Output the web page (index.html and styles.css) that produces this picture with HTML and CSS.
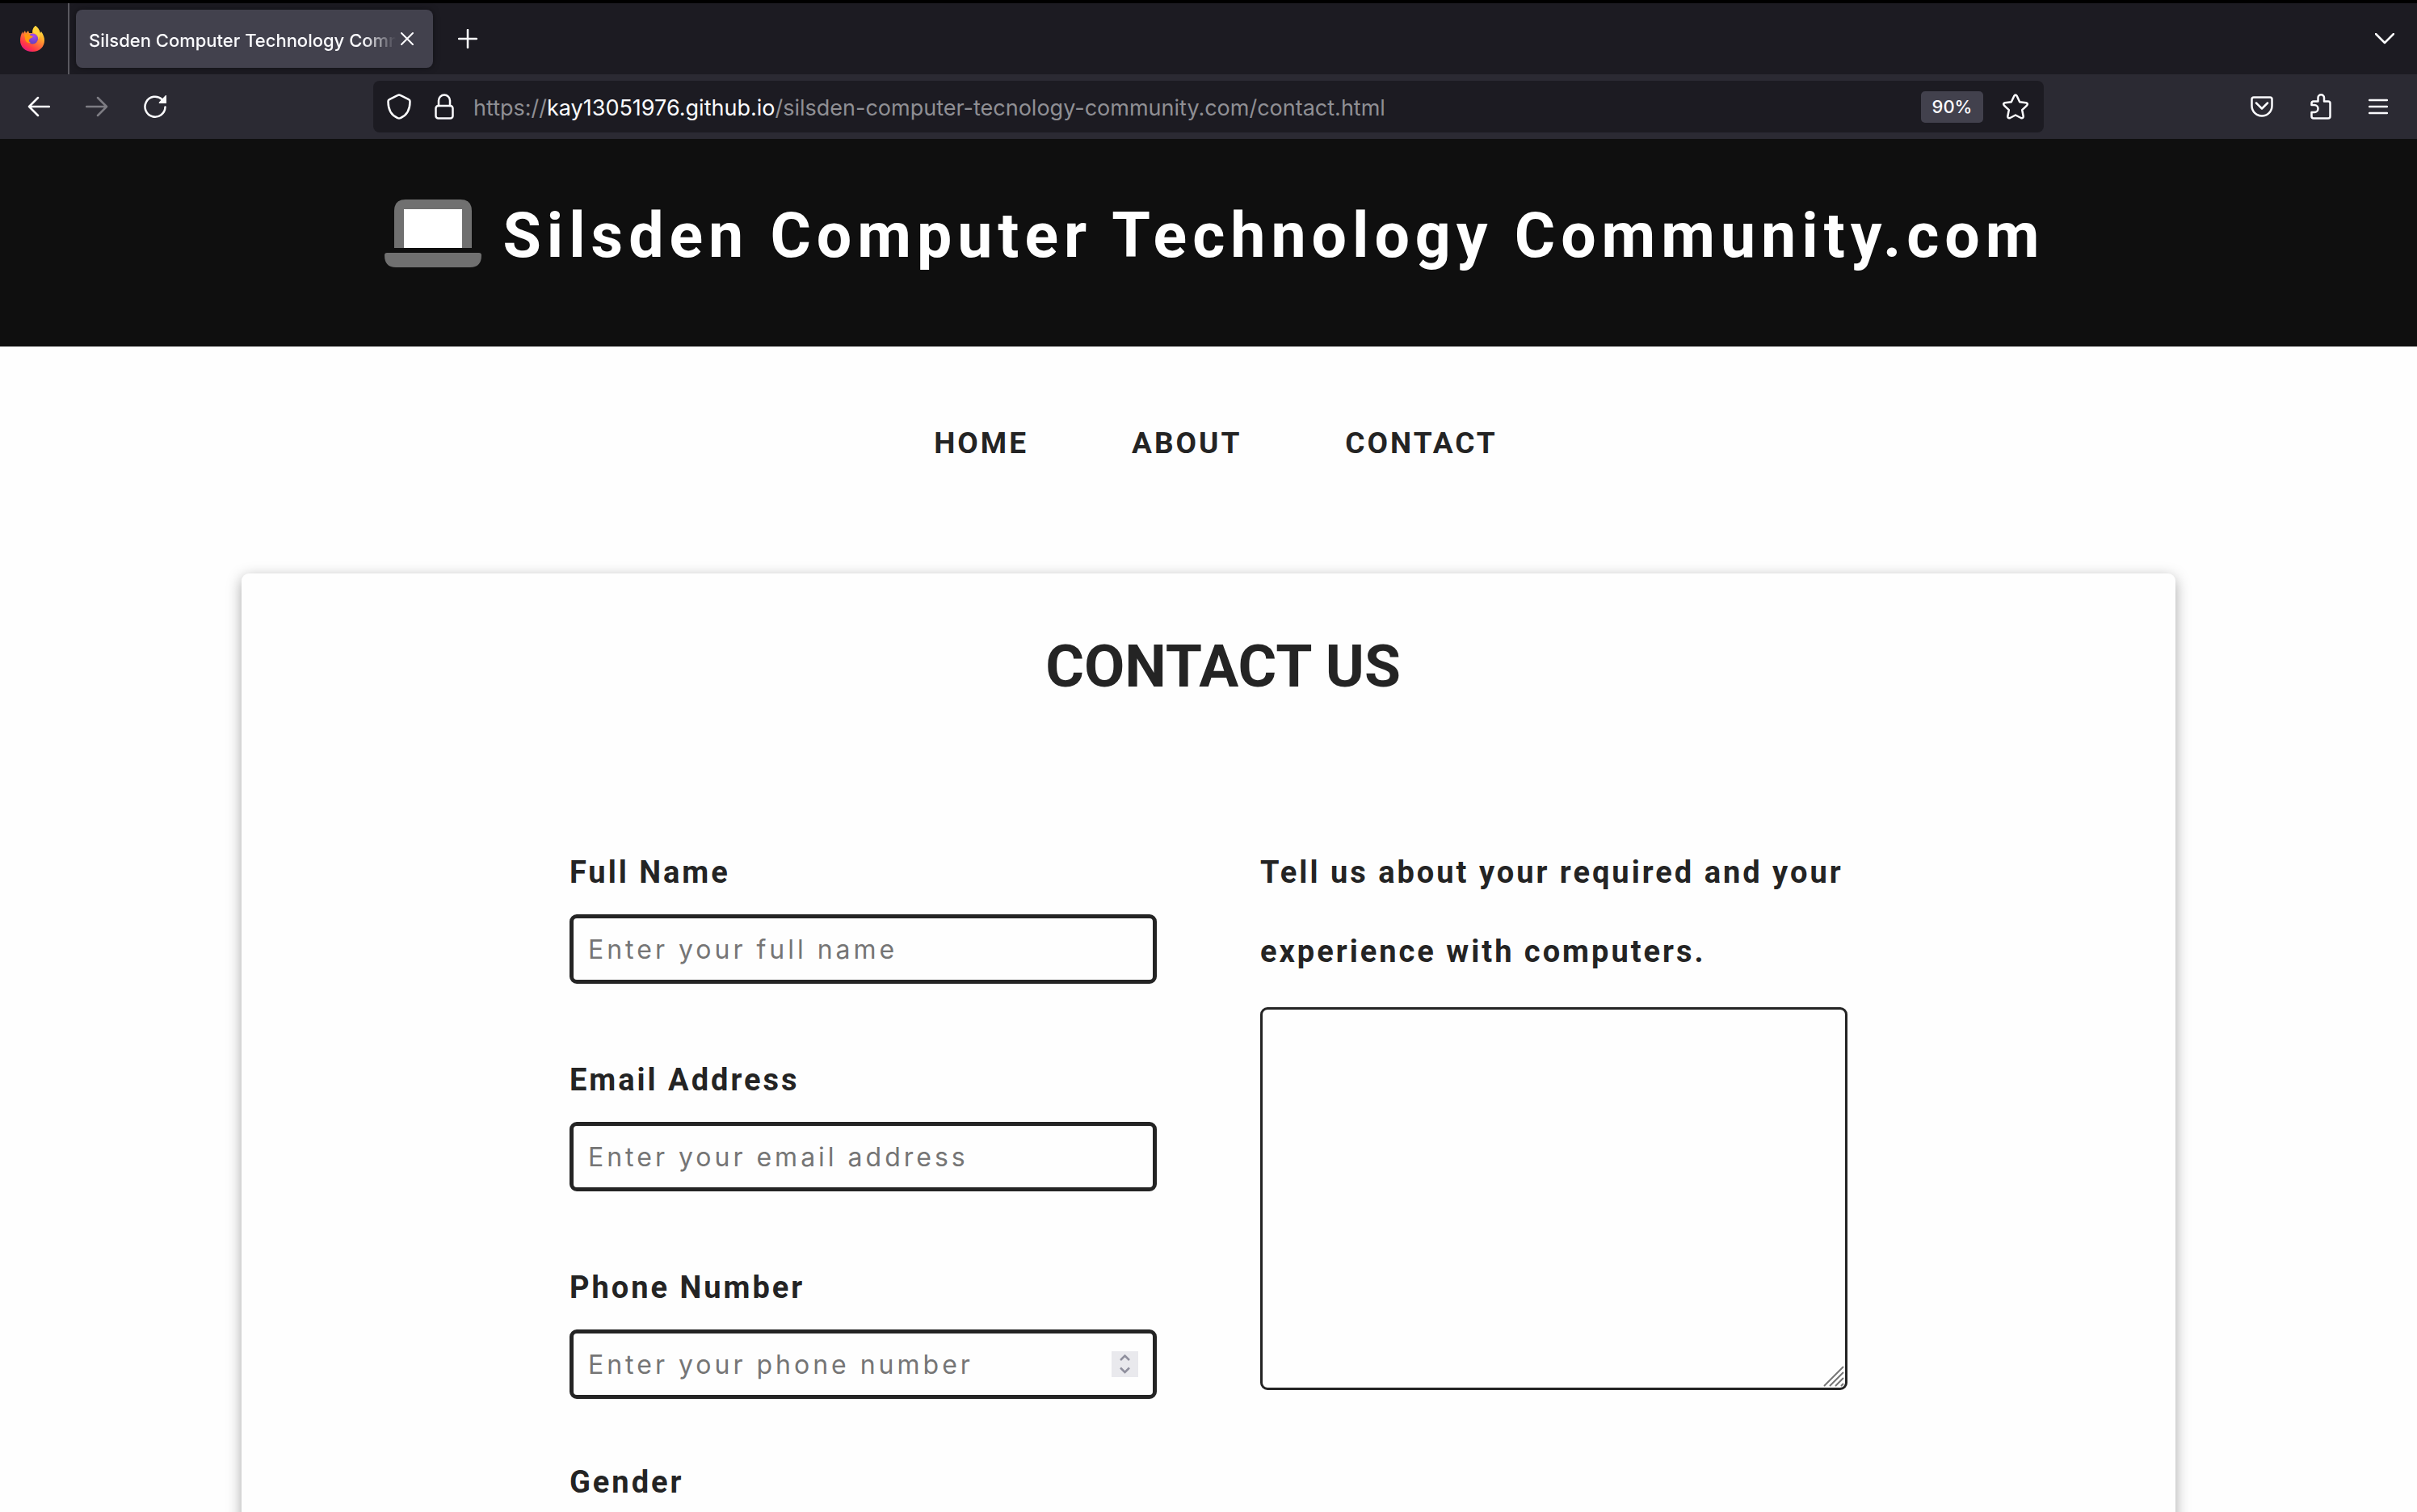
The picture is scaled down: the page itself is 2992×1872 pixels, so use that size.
FILE: index.html
```html
<!DOCTYPE html>
<html lang="en">
<head>
<meta charset="utf-8">
<meta name="viewport" content="width=device-width, initial-scale=1">
<title>Silsden Computer Technology Community</title>
<link rel="stylesheet" href="styles.css">
</head>
<body>
<div class="browser">
  <div class="tabs">
    <div class="tabs-pinned">
      <svg class="firefox" viewBox="0 0 30 32" aria-hidden="true">
        <defs>
          <linearGradient id="flame" x1="0.85" y1="0.05" x2="0.25" y2="1">
            <stop offset="0" stop-color="#fff44f"/>
            <stop offset="0.3" stop-color="#ffb12c"/>
            <stop offset="0.55" stop-color="#ff7139"/>
            <stop offset="0.8" stop-color="#ff3647"/>
            <stop offset="1" stop-color="#e31587"/>
          </linearGradient>
          <radialGradient id="globe" cx="0.6" cy="0.2" r="0.9">
            <stop offset="0" stop-color="#a84bf0"/>
            <stop offset="1" stop-color="#5b3fb8"/>
          </radialGradient>
        </defs>
        <path fill="url(#flame)" d="M19 0c3 2 5 5 6 9l1-2c3 4 4 8 4 11 0 8-6 14-15 14S0 26 0 18c0-4 1-8 3-11v3l3-4 1 3 3-3 1 3h4c0-4 1-7 4-9z"/>
        <circle cx="15.500" cy="16" r="6.500" fill="url(#globe)"/>
        <path fill="#ff980e" d="M5 11c3-2 6-1 8 1l3 1c-1 2-3 2-4 3-2 2-1 4 1 5-4 1-7-2-7-6z"/>
        <path fill="#ffd23c" d="M19 0c-4 3-4 7-2 9 4 1 6 4 5 8 3-3 3-7 2-9-1-4-3-6-5-8z"/>
      </svg>
    </div>
    <button class="tab" type="button"><span class="tab-title">Silsden Computer Technology Community</span></button>
    <button class="icon-button tab-close" type="button" aria-label="Close tab">
      <svg width="16" height="16" viewBox="0 0 16 16"><path d="M1 1l14 14M15 1L1 15"/></svg>
    </button>
    <button class="icon-button" type="button" aria-label="New tab">
      <svg width="24" height="24" viewBox="0 0 24 24"><path d="M12 1v22M1 12h22"/></svg>
    </button>
    <button class="icon-button tabs-list" type="button" aria-label="List all tabs">
      <svg width="24" height="14" viewBox="0 0 24 14"><path d="M1 1l11 11L23 1"/></svg>
    </button>
  </div>

  <div class="toolbar">
    <div class="history">
      <button class="icon-button" type="button" aria-label="Back">
        <svg width="28" height="26" viewBox="0 0 28 26"><path d="M27 13H2M13 2L2 13l11 11"/></svg>
      </button>
      <button class="icon-button is-off" type="button" aria-label="Forward" disabled>
        <svg width="28" height="26" viewBox="0 0 28 26"><path d="M1 13h25M15 2l11 11-11 11"/></svg>
      </button>
      <button class="icon-button" type="button" aria-label="Reload">
        <svg width="28" height="28" viewBox="0 0 28 28"><path d="M26.500 14.500a12.500 12.500 0 1 1-4-9.500"/><path class="solid" d="M28 0v10h-8.500q-1.500-.5-.5-1.500l7.500-8Q27.500-.5 28 0z"/></svg>
      </button>
    </div>
    <div class="address">
      <svg width="30" height="32" viewBox="0 0 30 32" aria-hidden="true"><path d="M15 1.500q1 0 2 .7l9.500 4.600q2 .8 2 3C28.500 20 24 27 17 30q-2 1-4 0C6 27 1.500 20 1.500 9.800q0-2.200 2-3L13 2.200q1-.7 2-.7z"/></svg>
      <svg width="24" height="32" viewBox="0 0 24 32" aria-hidden="true"><rect x="1.500" y="15" width="21" height="15.500" rx="3"/><path d="M5 15V8.500a7 7 0 0 1 14 0V15"/></svg>
      <div class="url" role="textbox" aria-label="Address">https://<span class="url-host">kay13051976.github.io</span>/silsden-computer-tecnology-community.com/contact.html</div>
      <button class="zoom-level" type="button">90%</button>
      <button class="icon-button" type="button" aria-label="Bookmark this page">
        <svg width="32" height="32" viewBox="0 0 32 32"><path d="M14.200 3q1.800-3 3.600 0l3.400 7.200 7.800 1q3 .8 1 3.400l-5.800 5.600 1.500 7.800q0 3-3 2L16 26.500 9.300 30q-3 1-3-2l1.500-7.800L2 14.600q-2-2.600 1-3.400l7.800-1z"/></svg>
      </button>
    </div>
    <div class="actions">
      <button class="icon-button" type="button" aria-label="Save to Pocket">
        <svg width="28" height="26" viewBox="0 0 28 26"><path d="M4 1.500h20q2.500 0 2.500 2.500v8a12.500 12.500 0 0 1-25 0V4q0-2.500 2.500-2.500z"/><path d="M7 8.500l7 7 7-7"/></svg>
      </button>
      <button class="icon-button" type="button" aria-label="Extensions">
        <svg width="26" height="32" viewBox="0 0 26 32"><path d="M4 9.500h5.500V5a3.500 3.500 0 0 1 7.500 0v4.500h5q2.500 0 2.500 2.500v16q0 2.500-2.500 2.500H4q-2.500 0-2.500-2.500v-5H5a4.500 4.500 0 0 0 0-9H1.500V12q0-2.500 2.500-2.500z"/></svg>
      </button>
      <button class="icon-button" type="button" aria-label="Menu">
        <svg width="24" height="20" viewBox="0 0 24 20"><path d="M1 2h22M1 10h22M1 18h22"/></svg>
      </button>
    </div>
  </div>

  <div class="page">
    <header class="site-header">
      <svg class="laptop" width="120" height="84" viewBox="0 0 120 84" aria-hidden="true">
        <path fill="#707070" d="M12 60V14Q12 0 26 0h68q14 0 14 14v46z"/>
        <path fill="#fff" d="M24 12h72v48H24z"/>
        <path fill="#707070" d="M3 66h114q3 0 3 3 0 15-14 15H14Q0 84 0 69q0-3 3-3z"/>
      </svg>
      <h1 class="site-title">Silsden Computer Technology Community.com</h1>
    </header>

    <nav class="site-nav">
      <a href="index.html">HOME</a>
      <a href="about.html">ABOUT</a>
      <a href="contact.html">CONTACT</a>
    </nav>

    <main class="card">
      <h2 class="card-title">CONTACT US</h2>
      <form class="form">
        <div class="column">
          <div class="field">
            <label for="name">Full Name</label>
            <input class="control" id="name" type="text" placeholder="Enter your full name">
          </div>
          <div class="field">
            <label for="email">Email Address</label>
            <input class="control" id="email" type="email" placeholder="Enter your email address">
          </div>
          <div class="field">
            <label for="phone">Phone Number</label>
            <div class="number">
              <input class="control" id="phone" type="number" placeholder="Enter your phone number">
              <svg class="stepper" width="33" height="32" viewBox="0 0 33 32" aria-hidden="true"><path d="M11 11l5.500-5.500L22 11M11 20.500l5.500 5.500 5.500-5.500"/></svg>
            </div>
          </div>
          <fieldset class="gender">
            <legend>Gender</legend>
          </fieldset>
        </div>
        <div class="column">
          <label for="about">Tell us about your required and your experience with computers.</label>
          <div class="message">
            <textarea id="about"></textarea>
            <svg class="grip" width="26" height="26" viewBox="0 0 26 26" aria-hidden="true"><path d="M1 25L25 1M8 25L25 8M15 25l10-10M22 25l3-3"/></svg>
          </div>
        </div>
      </form>
    </main>
  </div>
</div>
</body>
</html>
```

FILE: styles.css
```css
* {
  box-sizing: border-box;
}

body {
  margin: 0;
  background: #fefefe;
  color: #242424;
  font-family: Roboto, sans-serif;
}

.browser {
  display: flex;
  flex-direction: column;
  height: 100vh;
  overflow: hidden;
}

/* Browser chrome */

.tabs,
.toolbar {
  display: flex;
  flex-shrink: 0;
  align-items: center;
  color: #fbfbfe;
  font-family: Inter, sans-serif;
}

.tabs {
  height: 92px;
  border-top: 4px solid #000;
  background: #1c1b22;
}

.tabs-pinned {
  display: flex;
  align-items: center;
  align-self: stretch;
  width: 86px;
  padding-left: 25px;
  border-right: 2px solid #5a5960;
}

.firefox {
  width: 30px;
  height: 32px;
}

.tab {
  width: 442px;
  height: 72px;
  margin-left: 8px;
  padding: 4px 46px 0 16px;
  border: 0;
  border-radius: 8px;
  background: #42414d;
  box-shadow: 0 0 8px rgba(0, 0, 0, 0.4);
  color: inherit;
  font: 500 22px/32px Inter, sans-serif;
  text-align: left;
}

.tab-title {
  display: block;
  overflow: hidden;
  white-space: nowrap;
  mask-image: linear-gradient(to left, transparent, #000 40px);
}

.icon-button {
  display: flex;
  flex-shrink: 0;
  padding: 0;
  border: 0;
  background: none;
  color: inherit;
}

.tabs svg:not(.firefox),
.toolbar svg {
  flex-shrink: 0;
  fill: none;
  stroke: currentColor;
  stroke-width: 2.5;
  stroke-linecap: round;
  stroke-linejoin: round;
}

.toolbar .solid {
  fill: currentColor;
  stroke: none;
}

.tab-close {
  margin: 0 55px 0 -40px;
}

.tab-close svg:not(.firefox) {
  stroke-width: 2;
}

.tabs-list {
  margin-right: 28px;
  margin-left: auto;
}

.toolbar {
  height: 80px;
  background: #2b2a33;
}

.history {
  display: flex;
  align-items: center;
  gap: 44px;
  width: 462px;
  padding-left: 34px;
}

.is-off {
  color: #7d7c83;
}

.address {
  display: flex;
  flex: 1;
  align-items: center;
  gap: 24px;
  height: 64px;
  padding: 0 14px 0 17px;
  border-radius: 8px;
  background: #1c1b22;
}

.address svg:first-child {
  margin-right: 5px;
}

.url {
  flex: 1;
  padding-top: 2px;
  color: #8f8f94;
  font-size: 27px;
  white-space: nowrap;
}

.url-host {
  color: #fbfbfe;
}

.zoom-level {
  width: 77px;
  height: 39px;
  padding: 0;
  border: 0;
  border-radius: 5px;
  background: #42414d;
  color: inherit;
  font: 500 22px/39px Inter, sans-serif;
}

.actions {
  display: flex;
  align-items: center;
  justify-content: flex-end;
  gap: 46px;
  width: 462px;
  padding-right: 36px;
}

/* Site */

.page {
  flex: 1;
  min-height: 0;
  overflow: hidden;
}

.site-header {
  display: flex;
  justify-content: center;
  gap: 26px;
  height: 257px;
  padding: 75px 0 0 16px;
  background: #0f0f0f;
}

.site-title {
  margin: 0;
  color: #fff;
  font-size: 77px;
  font-weight: 700;
  line-height: 90px;
  letter-spacing: 7px;
}

.site-nav {
  display: flex;
  justify-content: center;
  gap: 128px;
  padding: 97px 0 139px 18px;
}

.site-nav a,
label,
legend {
  color: #242424;
  font-size: 37px;
  font-weight: 700;
  letter-spacing: 3px;
}

.site-nav a {
  line-height: 45px;
  text-decoration: none;
}

.card {
  width: 80%;
  margin: 0 auto;
  padding: 70px 0 128px;
  border-radius: 9px;
  box-shadow: 0 5px 18px rgba(0, 0, 0, 0.35);
}

.card-title {
  margin: 0 0 161px;
  padding-left: 36px;
  font-size: 73px;
  font-weight: 700;
  line-height: 90px;
  text-align: center;
}

.form {
  display: grid;
  grid-template-columns: 1fr 1fr;
  gap: 128px;
  width: 66.1%;
  margin: 0 auto;
}

.field {
  margin-bottom: 70px;
}

.field:nth-of-type(3) {
  margin-bottom: 54px;
}

label,
legend {
  display: block;
  padding: 0;
  font-size: 38px;
  line-height: 98px;
}

.control {
  display: block;
  width: 100%;
  height: 86px;
  margin-top: 3px;
  padding: 0 18px;
  border: 5px solid #242424;
  border-radius: 9px;
  background: transparent;
  color: #242424;
  font: 32px/40px Inter, sans-serif;
  letter-spacing: 4px;
  appearance: textfield;
}

.control::placeholder {
  color: #757575;
  opacity: 1;
}

.number,
.message {
  position: relative;
}

.stepper {
  position: absolute;
  top: 27px;
  right: 23px;
  background: #e9e9ed;
  fill: none;
  stroke: #8f8f9d;
  stroke-width: 2.5;
}

.gender {
  margin: 0;
  padding: 0;
  border: 0;
}

textarea {
  display: block;
  width: 100%;
  height: 474px;
  margin-top: 20px;
  padding: 16px;
  border: 3px solid #242424;
  border-radius: 9px;
  background: transparent;
  font: 32px/40px Inter, sans-serif;
  resize: none;
}

.grip {
  position: absolute;
  right: 4px;
  bottom: 4px;
  fill: none;
  stroke: #757575;
  stroke-width: 2;
}
```
